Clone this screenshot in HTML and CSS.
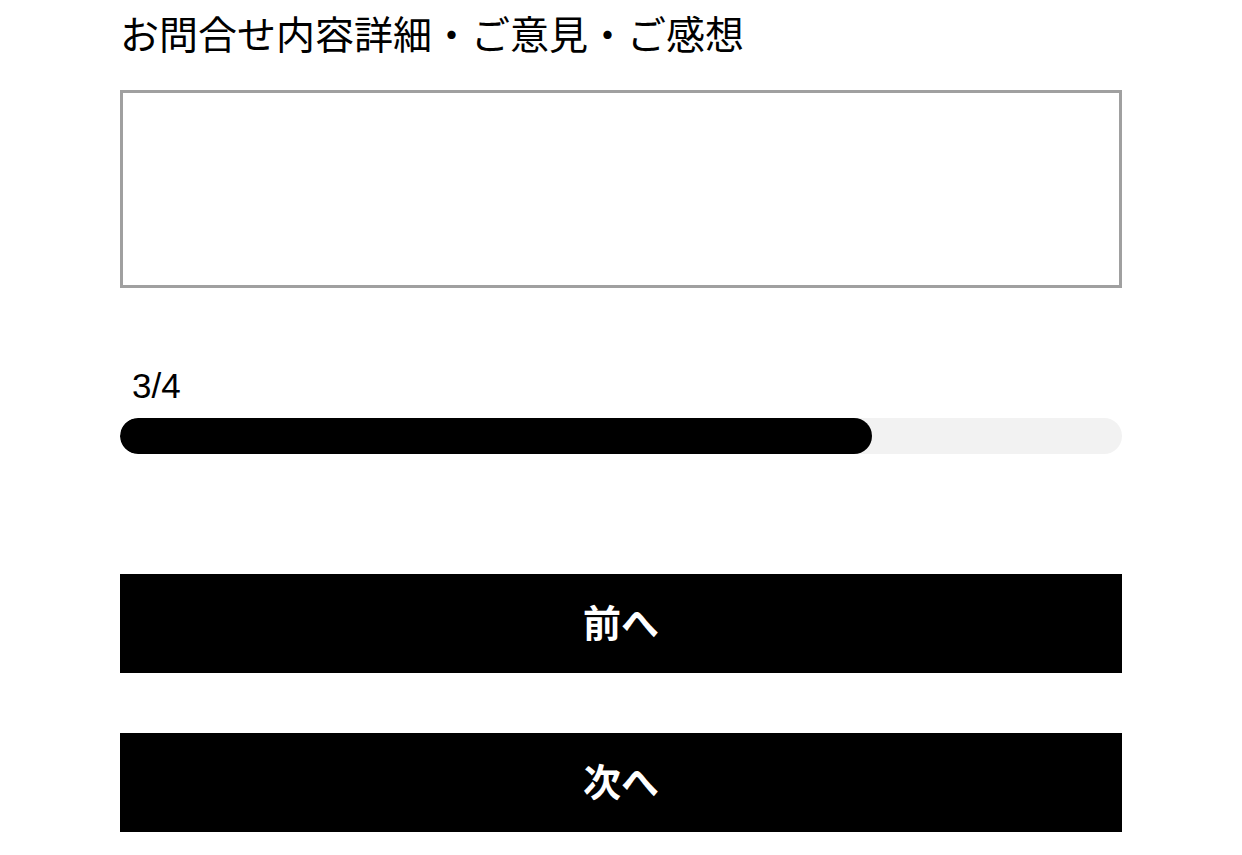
FILE: index.html
```html
<!DOCTYPE html>
<html lang="ja">
<head>
<meta charset="utf-8">
<title>お問合せ</title>
<link rel="stylesheet" href="styles.css">
</head>
<body>
<main class="form">
  <label class="field-label" for="detail">お問合せ内容詳細・ご意見・ご感想</label>
  <textarea id="detail" class="field-textarea"></textarea>
  <div class="progress">
    <div class="progress-text">3/4</div>
    <div class="progress-track"><div class="progress-fill" style="width:75%"></div></div>
  </div>
  <div class="actions">
    <button class="btn" type="button">前へ</button>
    <button class="btn" type="button">次へ</button>
  </div>
</main>
</body>
</html>
```
FILE: styles.css
```css
html, body {
  margin: 0;
  padding: 0;
  background: #fff;
}
body {
  font-family: "Noto Sans CJK JP", "Noto Sans", sans-serif;
  color: #000;
}
.form {
  width: 1002px;
  margin: 0 auto;
  display: flex;
  flex-direction: column;
}
.field-label {
  display: block;
  font-size: 39px;
  line-height: 52px;
  margin-top: 6px;
  padding-left: 0;
}
.field-textarea {
  display: block;
  box-sizing: border-box;
  width: 1002px;
  height: 198px;
  margin: 32px 0 0;
  border: 3px solid #a0a0a0;
  border-radius: 0;
  padding: 0;
  resize: none;
  outline: none;
  background: #fff;
}
.progress {
  margin-top: 78px;
  display: flex;
  flex-direction: column;
}
.progress-text {
  font-family: "Liberation Sans", Arial, sans-serif;
  font-size: 35px;
  line-height: 40px;
  padding-left: 12px;
}
.progress-track {
  margin-top: 12px;
  height: 36px;
  border-radius: 18px;
  background: #f2f2f2;
  overflow: hidden;
}
.progress-fill {
  height: 100%;
  background: #000;
  border-radius: 18px;
}
.actions {
  margin-top: 120px;
  display: flex;
  flex-direction: column;
  gap: 60px;
}
.btn {
  display: block;
  width: 100%;
  height: 99px;
  border: 0;
  border-radius: 0;
  background: #000;
  color: #fff;
  font-family: "Noto Sans CJK JP", sans-serif;
  font-size: 38px;
  font-weight: 700;
  line-height: 1;
  padding: 0 0 6px;
  cursor: pointer;
}
```
